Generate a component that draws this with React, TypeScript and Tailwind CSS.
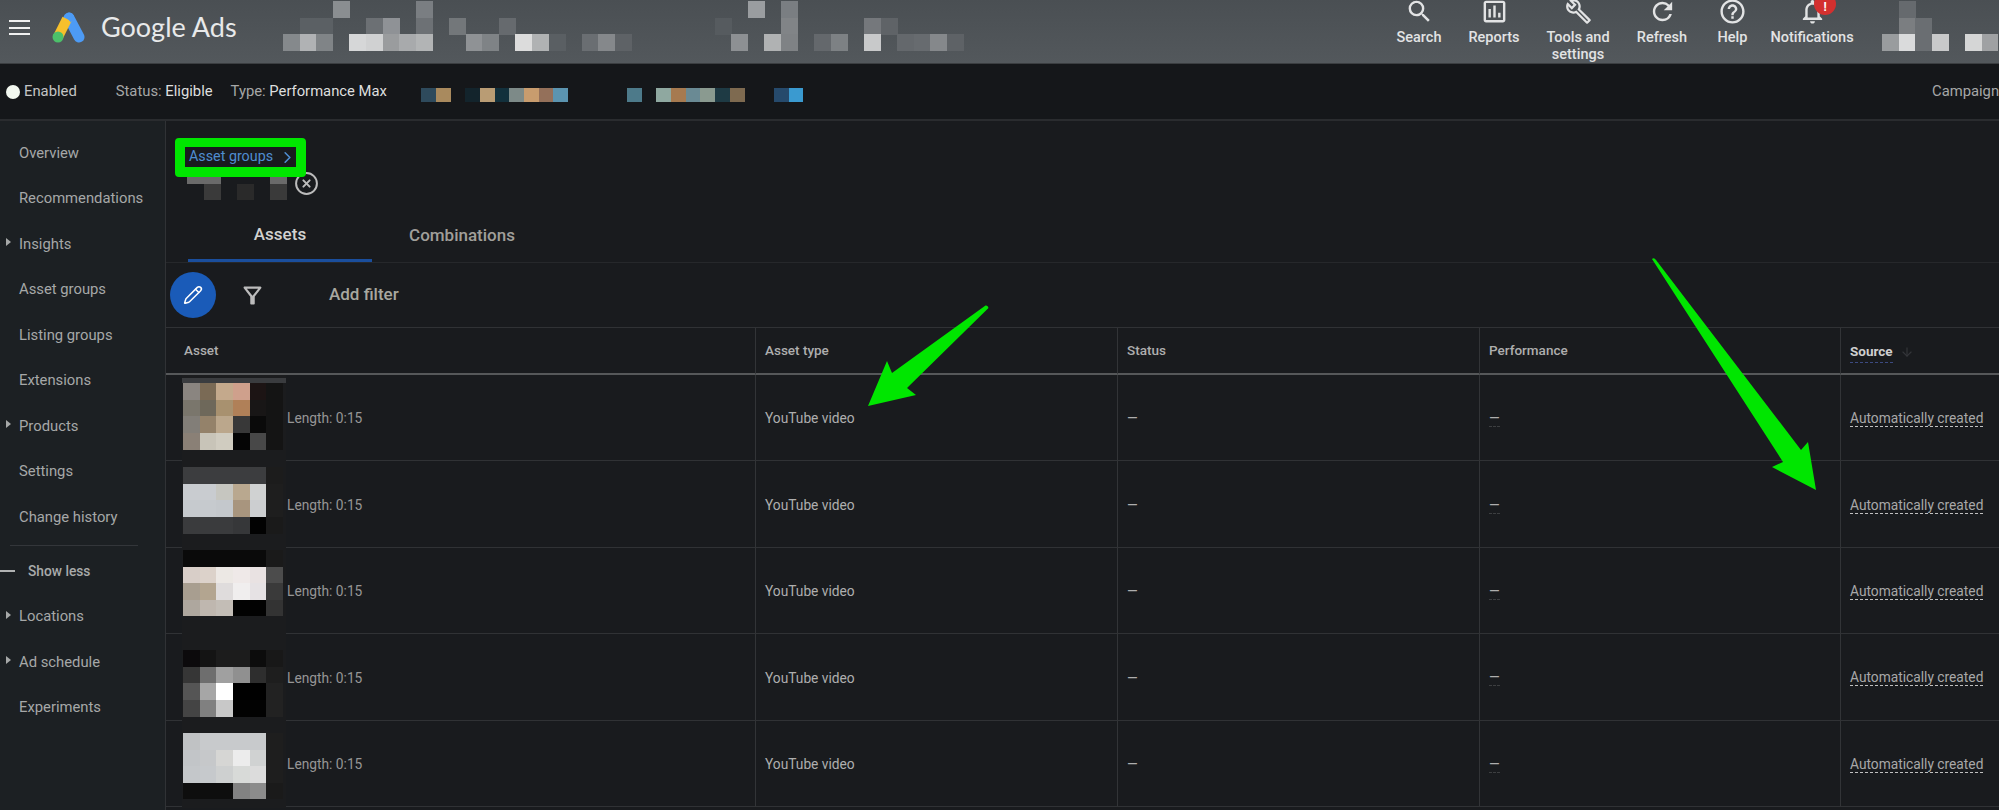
import React from 'react';
import { Pencil, CircleX, ChevronRight, ArrowDown } from 'lucide-react';
import { MdSearch, MdOutlineAssessment, MdOutlineBuild, MdRefresh, MdHelpOutline, MdNotificationsNone, MdOutlineFilterAlt } from 'react-icons/md';

type Cell = [number, number, string];

// blurred-out blocks, [row, col, colour]
const Mosaic = ({ cells, size, cols, rows, className, top }: { cells: Cell[]; size: number; cols: number; rows: number; className?: string; top?: number }) => (
  <svg width={cols * size} height={rows * size} className={className} style={top === undefined ? undefined : { top }} shapeRendering="crispEdges">
    {cells.map(([r, c, fill], i) => (
      <rect key={i} x={c * size} y={r * size} width={size + 0.3} height={size + 0.3} fill={fill} />
    ))}
  </svg>
);

const headerBlocks: Cell[] = [
  [0, 3, '#8a8e91'], [0, 8, '#7a7e82'], [0, 28, '#9a9da0'], [0, 30, '#7a7e82'],
  [1, 1, '#5b6064'], [1, 2, '#5b6064'], [1, 5, '#6c7074'], [1, 6, '#8f9296'], [1, 8, '#6d7175'], [1, 10, '#73777a'],
  [1, 13, '#666a6e'], [1, 26, '#565b5f'], [1, 30, '#818487'], [1, 35, '#75787c'], [1, 36, '#5f6367'],
  [2, 0, '#85898c'], [2, 1, '#b0b2b4'], [2, 2, '#808487'], [2, 4, '#d6d7d8'], [2, 5, '#d0d1d2'], [2, 6, '#9a9c9e'],
  [2, 7, '#a8aaac'], [2, 8, '#b2b4b5'], [2, 11, '#8f9295'], [2, 12, '#7f8386'], [2, 14, '#dcdcdc'], [2, 15, '#b0b2b3'],
  [2, 16, '#5a5f63'], [2, 18, '#6a6e72'], [2, 19, '#85888b'], [2, 20, '#5e6266'], [2, 27, '#8d9093'], [2, 29, '#b0b2b3'],
  [2, 30, '#7f8285'], [2, 32, '#64686c'], [2, 33, '#7d8184'], [2, 35, '#c8c9ca'], [2, 37, '#64686c'], [2, 38, '#676b6f'],
  [2, 39, '#85888b'], [2, 40, '#5e6266'],
];

const accountBlocks: Cell[] = [
  [0, 1, '#666a6e'], [1, 1, '#7b7e81'], [1, 2, '#6a6e72'],
  [2, 0, '#999c9e'], [2, 1, '#dadbdc'], [2, 2, '#6a6e72'], [2, 3, '#c8c9ca'], [2, 5, '#d5d6d6'], [2, 6, '#9fa1a3'],
];

const campaignBlocks: Cell[] = [
  [0, 0, '#2e4a5c'], [0, 1, '#a98a5e'], [0, 3, '#13242c'], [0, 4, '#b99c74'], [0, 5, '#12303c'], [0, 6, '#7d8a88'],
  [0, 7, '#c89c6e'], [0, 8, '#94705a'], [0, 9, '#5b94b0'], [0, 14, '#4d7a8a'], [0, 16, '#8fa8a0'], [0, 17, '#a67a50'],
  [0, 18, '#6a8a94'], [0, 19, '#8a9a90'], [0, 20, '#1e3a44'], [0, 21, '#7e6a50'], [0, 24, '#264a6c'], [0, 25, '#3a9ad0'],
];

const nameBlocks: Cell[] = [
  [0, 0, '#6a6a6a'], [0, 1, '#6a6a6a'], [0, 5, '#6a6a6a'],
  [1, 1, '#3a3a3a'], [1, 3, '#2a2a2a'], [1, 5, '#3a3a3a'],
];

const toCells = (rows: string[][]): Cell[] =>
  rows.flatMap((row, r) => row.map((fill, c) => [r, c, fill] as Cell));

const thumbs: { top: number; rows: string[][]; strip?: boolean }[] = [
  {
    top: 8,
    strip: true,
    rows: [
      ['#8a8580', '#7a6a55', '#c4a98c', '#cfa08c', '#1c1414', '#141414'],
      ['#7a766c', '#6e685a', '#a8916f', '#b08058', '#181616', '#141414'],
      ['#827e78', '#94826a', '#bba78c', '#383838', '#0a0a0a', '#141414'],
      ['#8a8076', '#c8c4b8', '#d0ccc0', '#050505', '#484848', '#141414'],
    ],
  },
  {
    top: 6,
    rows: [
      ['#3c3d3f', '#3c3d3f', '#3c3d3f', '#3c3d3f', '#3c3d3f', '#1c1c1c'],
      ['#c9ccd0', '#c9ccd0', '#c6c6c0', '#b9a88f', '#d0d2d2', '#1e1e1e'],
      ['#c6cace', '#c6cace', '#c4c8cc', '#a8957e', '#ccced0', '#1e1e1e'],
      ['#3a3b3d', '#3a3b3d', '#3a3b3d', '#363739', '#020202', '#1a1a1a'],
    ],
  },
  {
    top: 2,
    rows: [
      ['#0a0a0a', '#0a0a0a', '#0a0a0a', '#0a0a0a', '#0a0a0a', '#1a1a1a'],
      ['#d8cec8', '#dcd2ca', '#ece8e4', '#efe9e8', '#e9e2e2', '#4c4c4c'],
      ['#a89e90', '#b3a590', '#dfdcdc', '#f0eeee', '#e6e2e4', '#3a3a3a'],
      ['#aea79e', '#bfb7af', '#c3bdb6', '#020202', '#020202', '#333333'],
    ],
  },
  {
    top: 16,
    rows: [
      ['#0c0a0c', '#141414', '#1c1c1c', '#1c1c1c', '#0c0c0c', '#181818'],
      ['#363636', '#6e6e6e', '#a0a0a0', '#909090', '#2e2e2e', '#1e1e1e'],
      ['#555555', '#a6a6a6', '#ffffff', '#000000', '#000000', '#222222'],
      ['#444444', '#808080', '#c8c8c8', '#020202', '#020202', '#222222'],
    ],
  },
  {
    top: 12,
    rows: [
      ['#c0c2c4', '#c8cacc', '#c8cacc', '#c8cacc', '#c8cacc', '#1e1e1e'],
      ['#c2c5c8', '#c6c8ca', '#d6d6d4', '#ececec', '#d0d2d2', '#1e1e1e'],
      ['#c4c7ca', '#c6c9cc', '#ced0d0', '#d8dad8', '#dcdcdc', '#1e1e1e'],
      ['#0e0e0e', '#0e0e0e', '#0e0e0e', '#828282', '#8c8c8c', '#1a1a1a'],
    ],
  },
];

const navItems = [
  { label: 'Overview' },
  { label: 'Recommendations' },
  { label: 'Insights', arrow: true },
  { label: 'Asset groups' },
  { label: 'Listing groups' },
  { label: 'Extensions' },
  { label: 'Products', arrow: true },
  { label: 'Settings' },
  { label: 'Change history' },
];

const navItems2 = [
  { label: 'Locations', arrow: true },
  { label: 'Ad schedule', arrow: true },
  { label: 'Experiments' },
];

const NavRow = ({ label, arrow }: { label: string; arrow?: boolean }) => (
  <div className="relative flex h-[45.5px] items-center pl-[19px] text-[14.8px] text-[#a6a8a8]">
    {arrow && (
      <svg width="5" height="8" viewBox="0 0 5 8" className="absolute left-[6px] top-[17px]">
        <path d="M0 0l5 4-5 4z" fill="#a6a8a8" />
      </svg>
    )}
    {label}
  </div>
);

const HeaderAction = ({ icon, label, width }: { icon: React.ReactNode; label: React.ReactNode; width: string }) => (
  <div className={`flex flex-col items-center text-center text-[14.5px] leading-[17px] font-medium text-[#e2e3e4] ${width}`}>
    <div className="flex h-[29px] items-center justify-center pb-[6px]">{icon}</div>
    {label}
  </div>
);

const cellClass = 'flex items-center border-l border-[#323437] pl-[9px]';
const headCell = `${cellClass} h-[47px] border-b-2 !border-b-[#56585a]`;
const rowCell = `${cellClass} h-[86.4px] border-b !border-b-[#303235] pt-[2px]`;

export default function App() {
  return (
    <div className="relative h-[810px] w-[1999px] overflow-hidden bg-[#191b1e] font-['Roboto',sans-serif]">
      {/* Top bar */}
      <header className="flex h-[64px] items-start border-b border-[#3b3e41] bg-gradient-to-b from-[#4a4f53] to-[#53585c]">
        <div className="ml-[9px] mt-[20px] flex w-[21px] flex-col gap-[4.5px]">
          <div className="h-[2px] bg-[#f0f0f0]" />
          <div className="h-[2px] bg-[#f0f0f0]" />
          <div className="h-[2px] bg-[#f0f0f0]" />
        </div>
        <svg width="36" height="34" viewBox="0 0 36 34" className="ml-[21px] mt-[10px]">
          <line x1="18" y1="8" x2="28" y2="27" stroke="#4d9bf5" strokeWidth="11" strokeLinecap="round" />
          <line x1="16" y1="9" x2="7" y2="27" stroke="#f6c02c" strokeWidth="10" strokeLinecap="butt" />
          <circle cx="7" cy="27" r="5.5" fill="#4cc06a" />
          <path d="M18 2.5a5.5 5.5 0 0 1 4.8 2.9l-3 7-5.6-7a5.5 5.5 0 0 1 3.8-2.9z" fill="#4d9bf5" />
        </svg>
        <div className="ml-[14px] mt-[10px] font-['Lato',sans-serif] text-[27px] leading-[34px] text-[#e8e9ea]">Google Ads</div>
        <Mosaic cells={headerBlocks} size={16.6} cols={41} rows={3} className="absolute left-[283px] top-[1px]" />
        <div className="ml-auto mr-[140px] flex">
          <HeaderAction width="w-[74px]" icon={<MdSearch size={29} />} label="Search" />
          <HeaderAction width="w-[76px]" icon={<MdOutlineAssessment size={29} />} label="Reports" />
          <HeaderAction width="w-[92px]" icon={<MdOutlineBuild size={27} />} label={<>Tools and<br />settings</>} />
          <HeaderAction width="w-[76px]" icon={<MdRefresh size={29} />} label="Refresh" />
          <HeaderAction width="w-[65px]" icon={<MdHelpOutline size={29} />} label="Help" />
          <div className="relative">
            <HeaderAction width="w-[94px]" icon={<MdNotificationsNone size={29} />} label="Notifications" />
            <div className="absolute left-[49px] top-[-7px] flex h-[22px] w-[22px] items-center justify-center rounded-full bg-[#d3302f] pt-[5px] text-[12px] font-bold text-white">!</div>
          </div>
        </div>
        <Mosaic cells={accountBlocks} size={16.6} cols={7} rows={3} className="absolute left-[1882px] top-[1px]" />
      </header>

      {/* Campaign status */}
      <div className="flex h-[57px] items-center border-b-2 border-[#2a2c2f] bg-[#15171a] text-[14.8px] text-[#a6a7a7]">
        <div className="ml-[6px] h-[14px] w-[14px] rounded-full bg-[#f2f8f0]" />
        <span className="ml-[4px] text-[#c4c5c5]">Enabled</span>
        <span className="ml-[39px]">Status: <span className="text-[#dedfdf]">Eligible</span></span>
        <span className="ml-[18px]">Type: <span className="text-[#dedfdf]">Performance Max</span></span>
        <Mosaic cells={campaignBlocks} size={14.7} cols={26} rows={1} className="ml-[34px] mt-[7px]" />
        <span className="ml-auto w-[67px] whitespace-nowrap text-[#a6a7a7]">Campaign</span>
      </div>

      <div className="flex h-[689px]">
        {/* Sidebar */}
        <aside className="w-[166px] shrink-0 border-r border-[#303235] bg-[#1c2023] pt-[9px]">
          {navItems.map((item) => (
            <NavRow key={item.label} {...item} />
          ))}
          <div className="ml-[10px] mt-[5px] w-[128px] border-t border-[#33363a]" />
          <div className="relative mt-[9px] flex h-[34px] items-center pl-[28px] text-[13.75px] font-medium text-[#a8aaaa]">
            <div className="absolute left-0 top-[15px] h-[2px] w-[15px] bg-[#b0b2b2]" />
            Show less
          </div>
          <div className="mt-[5px]">
            {navItems2.map((item) => (
              <NavRow key={item.label} {...item} />
            ))}
          </div>
        </aside>

        <main className="min-w-0 flex-1">
          {/* Breadcrumb and tabs */}
          <div className="h-[142px] border-b border-[#26282b]">
            <div className="flex h-[46px] items-end pl-[23px]">
              <div className="flex h-[20px] items-center text-[14.3px] text-[#4f8dd0]">
                Asset groups
                <ChevronRight size={19} className="ml-[5px]" strokeWidth={2} />
              </div>
            </div>
            <div className="flex h-[33px] pl-[21px]">
              <Mosaic cells={nameBlocks} size={16.6} cols={6} rows={2} />
              <CircleX size={25} strokeWidth={1.9} className="ml-[7px] mt-[4px] text-[#bcbcbc]" />
            </div>
            <div className="mt-[8px] flex h-[54px] pl-[22px]">
              <div className="flex w-[184px] items-center justify-center border-b-[3px] border-[#1a4e9c] pt-[2px] text-[17px] font-medium text-[#d2d2d0]">Assets</div>
              <div className="flex w-[180px] items-center justify-center pt-[2px] text-[17px] font-medium text-[#a09f9a]">Combinations</div>
            </div>
          </div>

          {/* Toolbar */}
          <div className="flex h-[65px] items-center border-b border-[#303235] pl-[4px]">
            <div className="flex h-[46px] w-[46px] items-center justify-center rounded-full bg-[#1a5bb8] text-white">
              <Pencil size={20} strokeWidth={1.8} />
            </div>
            <MdOutlineFilterAlt size={27} className="ml-[23px] text-[#bcbcbc]" />
            <div className="ml-[63px] text-[17px] font-medium text-[#a8a8a0]">Add filter</div>
          </div>

          {/* Table */}
          <div className="grid grid-cols-[589px_362px_362px_361px_1fr] text-[13.75px] text-[#aeaeae]">
            <div className="flex h-[47px] items-center border-b-2 border-[#56585a] pl-[18px] text-[13.5px] font-medium">Asset</div>
            <div className={`${headCell} text-[13.5px] font-medium`}>Asset type</div>
            <div className={`${headCell} text-[13.5px] font-medium`}>Status</div>
            <div className={`${headCell} text-[13.5px] font-medium`}>Performance</div>
            <div className={`${headCell} pt-[3px] text-[13.5px] font-bold text-[#cfcfcf]`}>
              <span className="border-b border-dashed border-[#3c4a80] pb-[1px]">Source</span>
              <ArrowDown size={14} className="ml-[7px] text-[#34363a]" />
            </div>

            {thumbs.map((t, i) => (
              <React.Fragment key={i}>
                <div className="flex h-[86.4px] items-center border-b border-[#303235]">
                  <div className="relative z-10 -mb-px ml-[16px] h-[87px] w-[104px] shrink-0 self-start bg-[#1b1c1e]">
                    {t.strip && <div className="absolute left-0 top-[3px] h-[5px] w-full bg-[#3a3c3f]" />}
                    <Mosaic cells={toCells(t.rows)} size={16.67} cols={6} rows={4} className="absolute left-[1px]" top={t.top} />
                  </div>
                  <span className="ml-[1px] pt-[2px] text-[#969696]">Length: 0:15</span>
                </div>
                <div className={rowCell}>YouTube video</div>
                <div className={rowCell}>—</div>
                <div className={rowCell}>
                  <span className="border-b border-dashed border-[#3c3e40] leading-[16px]">—</span>
                </div>
                <div className={rowCell}>
                  <span className="whitespace-nowrap border-b border-dashed border-[#c0c0c0] leading-[16px] text-[#a8a8a8]">Automatically created</span>
                </div>
              </React.Fragment>
            ))}
          </div>
        </main>
      </div>

      {/* Annotations */}
      <div className="absolute left-[175px] top-[138px] h-[39px] w-[131px] rounded-[4px] border-x-[10px] border-b-[10px] border-t-[9px] border-[#00e600]" />
      <svg width="1999" height="810" className="pointer-events-none absolute left-0 top-0">
        <path d="M985.5 305.5 Q988 305 988.5 308 L907 388 L916 395 L868 406 L887 361 L892 373 Z" fill="#00e600" />
        <path d="M1652 259 Q1654 257 1656 260 L1801 450 L1808 442 L1816 490 L1772 467 L1783 462 Z" fill="#00e600" />
      </svg>
    </div>
  );
}
